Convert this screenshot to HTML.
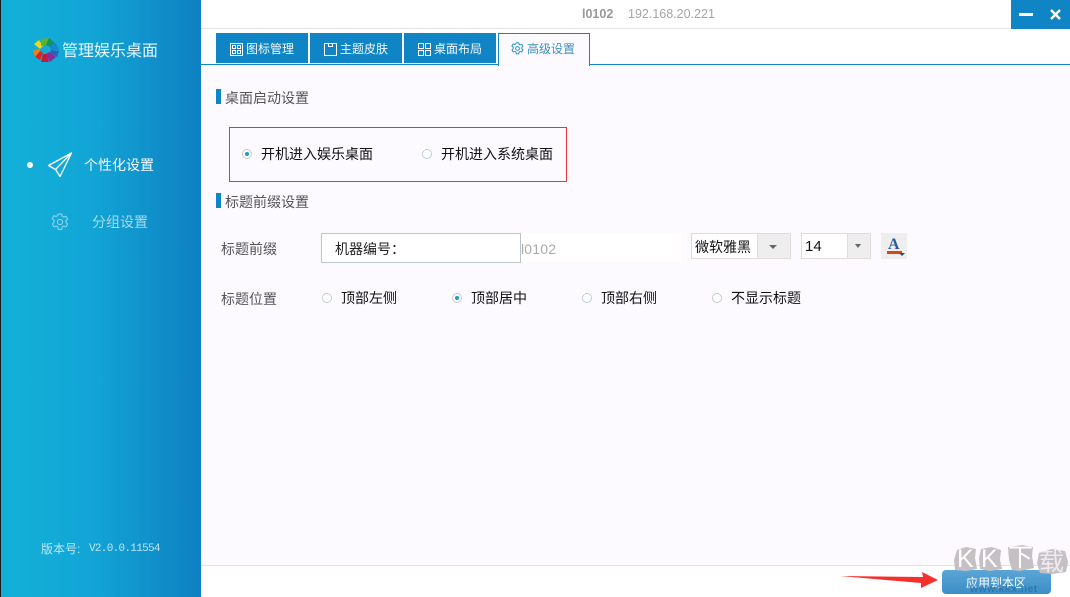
<!DOCTYPE html>
<html lang="zh-CN">
<head>
<meta charset="utf-8">
<title>管理娱乐桌面</title>
<style>
html,body{margin:0;padding:0;width:1070px;height:597px;overflow:hidden;background:#fdfaff}
body{position:relative;font-family:"Liberation Sans","Noto Sans CJK SC",sans-serif;font-size:14px;color:#111}
.a{position:absolute;white-space:nowrap;line-height:18px}
.b{position:absolute}
.side{left:0;top:0;width:201px;height:597px;background:linear-gradient(90deg,#12b1d8 0%,#12a5d6 45%,#0f80c2 100%)}
.tab{position:absolute;top:33px;width:92px;height:30px;background:#1085c5;color:#f0f8fc;font-size:12px;line-height:33px;white-space:nowrap}
.tab span{position:absolute;left:30px;top:0}
.tab svg{position:absolute;left:14px;top:10px}
.r{position:absolute;width:8px;height:8px;border:1px solid #c4cdd2;border-radius:50%;background:#fff}
.r.on::after{content:"";position:absolute;left:2px;top:2px;width:4px;height:4px;border-radius:50%;background:#1f9cc5}
.h{position:absolute;left:216px;width:5px;height:15px;background:#1085c5}
.g{color:#555}
.wm{position:absolute;color:#fff;line-height:26px}
</style>
</head>
<body>
<div class="b" style="left:201px;top:0;width:869px;height:28px;background:#fff"></div>
<div class="b" style="left:201px;top:28px;width:869px;height:1px;background:#e6e6e6"></div>
<div class="b" style="left:201px;top:29px;width:869px;height:35px;background:#fff"></div>
<div class="b" style="left:201px;top:64px;width:869px;height:1px;background:#1085c5"></div>

<div class="b side"></div>
<div class="b" style="left:0;top:0;width:1px;height:597px;background:#1c1c1c"></div>

<svg class="b" style="left:32px;top:37px" width="28" height="26" viewBox="0 0 28 26">
<path d="M8 12 L2 7 L7 3 L11 9Z" fill="#e8d81a"/>
<path d="M9 9 L9 2 L17 1 L15 8Z" fill="#5fb030"/>
<path d="M14 8 L17 1 L23 6 L18 10Z" fill="#12965a"/>
<path d="M17 9 L24 6 L27 13 L19 13Z" fill="#1787cf"/>
<path d="M19 13 L27 14 L25 20 L18 16Z" fill="#2a62b4"/>
<path d="M17 15 L24 20 L18 25 L14 17Z" fill="#8c2a9c"/>
<path d="M15 17 L17 25 L9 25 L11 17Z" fill="#c21a3c"/>
<path d="M11 16 L8 23 L3 20 L8 14Z" fill="#d8261e"/>
<path d="M8 14 L3 20 L1 14 L8 11Z" fill="#f08010"/>
<circle cx="13" cy="13" r="3.5" fill="#17a8d6"/>
</svg>
<div class="a" style="left:62px;top:42px;font-size:16px;line-height:20px;color:#e8f6fb">管理娱乐桌面</div>

<div class="b" style="left:27px;top:162px;width:6px;height:6px;border-radius:50%;background:#fff"></div>
<svg class="b" style="left:47px;top:152px" width="26" height="26" viewBox="0 0 26 26" fill="none" stroke="#fff" stroke-width="1.3" stroke-linejoin="round">
<path d="M24.5 1 L1.5 13.5 L8.5 17.5 L13 24.5 Z"/><path d="M24.5 1 L8.5 17.5"/>
</svg>
<div class="a" style="left:84px;top:156px;color:#f4fbfe;font-size:14px">个性化设置</div>

<svg class="b" style="left:51px;top:213px" width="18" height="18" viewBox="0 0 18 18" fill="none" stroke="#8fd4ee" stroke-width="1.1" stroke-linejoin="round">
<path d="M7.3 1h3.4l.5 2.3 1.5.8 2.2-.8 1.7 3-1.7 1.5v1.6l1.7 1.5-1.7 3-2.2-.8-1.5.8-.5 2.6H7.3l-.5-2.6-1.5-.8-2.2.8-1.7-3 1.7-1.5V7.2L1.2 5.7l1.7-3 2.2.8 1.5-.8z"/><circle cx="9" cy="9" r="2.6"/>
</svg>
<div class="a" style="left:92px;top:213px;color:#a5dcf0;font-size:14px">分组设置</div>

<div class="a" style="left:41px;top:540px;color:#bde6f5;font-size:12px">版本号:</div>
<div class="a" style="left:89px;top:540px;color:#bde6f5;font-family:'Liberation Mono',monospace;font-size:11px;letter-spacing:-.7px">V2.0.0.11554</div>

<div class="a" style="left:582px;top:5px;font-size:12.5px;font-weight:bold;color:#999">l0102</div>
<div class="a" style="left:628px;top:5px;font-size:12.5px;color:#a5a5a5">192.168.20.221</div>

<div class="b" style="left:1011px;top:0;width:59px;height:29px;background:#1085c5"></div>
<div class="b" style="left:1019px;top:13px;width:14px;height:3px;background:#fff"></div>
<svg class="b" style="left:1050px;top:9px" width="11" height="11" viewBox="0 0 11 11" stroke="#fff" stroke-width="2.4"><path d="M1 1L10 10M10 1L1 10"/></svg>

<div class="tab" style="left:216px"><svg width="13" height="13" viewBox="0 0 13 13" fill="none" stroke="#fff" stroke-width="1"><rect x=".5" y=".5" width="12" height="12"/><path d="M2.5 2.5h3v3h-3zM7.5 2.5h3v3h-3zM2.5 7.5h3v3h-3zM7.5 7.5h3v3h-3z"/></svg><span>图标管理</span></div>
<div class="tab" style="left:310px"><svg width="13" height="13" viewBox="0 0 13 13" fill="none" stroke="#fff" stroke-width="1"><path d="M.5.5h12v12H.5zM4.5 .5v3h4v-3"/></svg><span>主题皮肤</span></div>
<div class="tab" style="left:404px"><svg width="13" height="13" viewBox="0 0 13 13" fill="none" stroke="#fff" stroke-width="1"><rect x=".5" y=".5" width="5" height="5"/><rect x="7.5" y=".5" width="5" height="5"/><rect x=".5" y="7.5" width="5" height="5"/><rect x="7.5" y="7.5" width="5" height="5"/></svg><span>桌面布局</span></div>
<div class="b" style="left:498px;top:33px;width:90px;height:32px;border:1px solid #1085c5;border-bottom:none;background:#fdfaff"></div>
<svg class="b" style="left:511px;top:42px" width="13" height="13" viewBox="0 0 18 18" fill="none" stroke="#2f93c9" stroke-width="1.4" stroke-linejoin="round"><path d="M7.3 1h3.4l.5 2.3 1.5.8 2.2-.8 1.7 3-1.7 1.5v1.6l1.7 1.5-1.7 3-2.2-.8-1.5.8-.5 2.6H7.3l-.5-2.6-1.5-.8-2.2.8-1.7-3 1.7-1.5V7.2L1.2 5.7l1.7-3 2.2.8 1.5-.8z"/><circle cx="9" cy="9" r="2.6"/></svg>
<div class="a" style="left:527px;top:40px;font-size:12px;color:#3d8fbd">高级设置</div>

<div class="h" style="top:89px"></div>
<div class="a g" style="left:225px;top:89px">桌面启动设置</div>
<div class="b" style="left:229px;top:127px;width:336px;height:53px;border:1px solid #e8353a"></div>
<div class="r on" style="left:242px;top:149px"></div>
<div class="a" style="left:261px;top:145px">开机进入娱乐桌面</div>
<div class="r" style="left:422px;top:149px"></div>
<div class="a" style="left:441px;top:145px">开机进入系统桌面</div>

<div class="h" style="top:193px"></div>
<div class="a g" style="left:225px;top:193px">标题前缀设置</div>

<div class="a g" style="left:221px;top:240px">标题前缀</div>
<div class="b" style="left:521px;top:233px;width:160px;height:29px;background:#fff"></div>
<div class="b" style="left:321px;top:233px;width:198px;height:28px;border:1px solid #bcc4cb;background:#fff"></div>
<div class="a" style="left:335px;top:240px;color:#222">机器编号：</div>
<div class="a" style="left:521px;top:240px;color:#aaa;font-size:14px;letter-spacing:.2px">l0102</div>

<div class="b" style="left:691px;top:233px;width:98px;height:24px;border:1px solid #e2dcd8;background:#fff"></div>
<div class="b" style="left:757px;top:234px;width:33px;height:24px;background:#eeeeee;border-left:1px solid #e2dcd8;box-sizing:border-box"></div>
<div class="b" style="left:769px;top:245px;border:4px solid transparent;border-top:4px solid #666;border-bottom:0"></div>
<div class="a" style="left:695px;top:238px">微软雅黑</div>

<div class="b" style="left:801px;top:233px;width:68px;height:24px;border:1px solid #e2dcd8;background:#fff"></div>
<div class="b" style="left:847px;top:234px;width:23px;height:24px;background:#eeeeee;border-left:1px solid #e2dcd8;box-sizing:border-box"></div>
<div class="b" style="left:855px;top:244px;border:3.5px solid transparent;border-top:4px solid #666;border-bottom:0"></div>
<div class="a" style="left:805px;top:238px;font-size:15px">14</div>

<div class="b" style="left:881px;top:233px;width:26px;height:26px;background:#eee"></div>
<div class="a" style="left:888px;top:236px;font-size:16px;font-weight:bold;font-family:'Liberation Serif',serif;color:#2c5a9c;line-height:18px">A</div>
<div class="b" style="left:887px;top:251px;width:15px;height:3px;background:#d8471c"></div>
<div class="b" style="left:899px;top:253px;border:3px solid transparent;border-top:3px solid #2c4a70;border-bottom:0"></div>

<div class="a g" style="left:221px;top:290px">标题位置</div>
<div class="r" style="left:322px;top:293px"></div>
<div class="a" style="left:341px;top:289px">顶部左侧</div>
<div class="r on" style="left:452px;top:293px"></div>
<div class="a" style="left:471px;top:289px">顶部居中</div>
<div class="r" style="left:582px;top:293px"></div>
<div class="a" style="left:601px;top:289px">顶部右侧</div>
<div class="r" style="left:712px;top:293px"></div>
<div class="a" style="left:731px;top:289px">不显示标题</div>

<div class="b" style="left:201px;top:565px;width:869px;height:1px;background:#e2e2e2"></div>
<div class="b" style="left:201px;top:566px;width:869px;height:31px;background:#fff"></div>

<div class="b" style="left:942px;top:570px;width:109px;height:24px;border-radius:4px;background:linear-gradient(180deg,#5aa6d6,#3c8ec6)"></div>
<div class="a" style="left:966px;top:574px;font-size:12px;line-height:18px;color:#fff">应用到本区</div>
<div class="a" style="left:970px;top:583px;font-size:10.5px;line-height:12px;font-weight:bold;letter-spacing:.4px;color:#2f78ab">www.kkx.net</div>

<svg class="b" style="left:0;top:0" width="1070" height="597" viewBox="0 0 1070 597"><path d="M840 576 L923 577 L922 572 L938 580 L921 588 L921 583 Z" fill="#f5302c"/>
<path d="M957 550 L966 547 L976 549 L975 558 L977 569 L966 571 L955 570 L954 560Z" fill="#c4c0c4"/>
<path d="M981 549 L992 547 L1001 550 L1000 560 L1002 569 L990 571 L980 569 L979 558Z" fill="#c4c0c4"/>
<path d="M1008 547 L1022 545 L1033 547 L1032 556 L1034 568 L1020 571 L1012 570 L1009 560Z" fill="#c4c0c4"/>
<path d="M1039 553 L1052 549 L1065 551 L1068 562 L1066 572 L1052 574 L1040 573 L1037 563Z" fill="#c4c0c4"/></svg>
<div class="wm" style="left:957px;top:546px;font-size:25px">K</div>
<div class="wm" style="left:981px;top:546px;font-size:25px">K</div>
<div class="wm" style="left:1008px;top:545px;font-size:25px">下</div>
<div class="wm" style="left:1039px;top:549px;font-size:25px;color:#eeeaee">载</div>
</body>
</html>
